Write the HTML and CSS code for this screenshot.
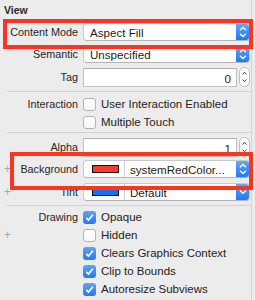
FILE: index.html
```html
<!DOCTYPE html>
<html lang="en">
<head>
  <meta charset="UTF-8">
  <title>View Inspector</title>
  <link rel="stylesheet" href="styles.css">
</head>
<body>
  <div class="inspector">
    <div class="title">View</div>

    <div class="group group-mode">
      <div class="row">
        <div class="label">Content Mode</div>
        <div class="popup">
          <span class="popup-text">Aspect Fill</span>
          <span class="popup-btn"><svg width="14" height="18" viewBox="0 0 14 18"><path d="M4 7.2 L7 4.4 L10 7.2 M4 10.8 L7 13.6 L10 10.8" fill="none" stroke="#fff" stroke-width="1.3"/></svg></span>
        </div>
      </div>
      <div class="row">
        <div class="label">Semantic</div>
        <div class="popup">
          <span class="popup-text">Unspecified</span>
          <span class="popup-btn"><svg width="14" height="18" viewBox="0 0 14 18"><path d="M4 7.2 L7 4.4 L10 7.2 M4 10.8 L7 13.6 L10 10.8" fill="none" stroke="#fff" stroke-width="1.3"/></svg></span>
        </div>
      </div>
      <div class="row">
        <div class="label">Tag</div>
        <div class="field-wrap">
          <div class="field">0</div>
          <svg class="stepper" width="11" height="20" viewBox="0 0 11 20"><rect x="0.5" y="0.5" width="10" height="19" rx="5" fill="#fff" stroke="#bdbdbd"/><path d="M3.5 7.5 L5.5 5.2 L7.5 7.5 M3.5 12.5 L5.5 14.8 L7.5 12.5" fill="none" stroke="#444" stroke-width="1"/></svg>
        </div>
      </div>
    </div>

    <div class="sep"></div>

    <div class="group group-interaction">
      <div class="row row-check">
        <div class="label">Interaction</div>
        <label class="check"><span class="box"></span>User Interaction Enabled</label>
      </div>
      <div class="row row-check">
        <div class="label"></div>
        <label class="check"><span class="box"></span>Multiple Touch</label>
      </div>
    </div>

    <div class="sep sep-2"></div>

    <div class="group group-color">
      <div class="row">
        <div class="label">Alpha</div>
        <div class="field-wrap">
          <div class="field">1</div>
          <svg class="stepper" width="11" height="20" viewBox="0 0 11 20"><rect x="0.5" y="0.5" width="10" height="19" rx="5" fill="#fff" stroke="#bdbdbd"/><path d="M3.5 7.5 L5.5 5.2 L7.5 7.5 M3.5 12.5 L5.5 14.8 L7.5 12.5" fill="none" stroke="#444" stroke-width="1"/></svg>
        </div>
      </div>
      <div class="row">
        <div class="label"><span class="plus">+</span>Background</div>
        <div class="popup">
          <span class="swatch-cell"><span class="swatch swatch-red"></span></span>
          <span class="popup-text">systemRedColor...</span>
          <span class="popup-btn"><svg width="14" height="18" viewBox="0 0 14 18"><path d="M4 7.2 L7 4.4 L10 7.2 M4 10.8 L7 13.6 L10 10.8" fill="none" stroke="#fff" stroke-width="1.3"/></svg></span>
        </div>
      </div>
      <div class="row">
        <div class="label"><span class="plus">+</span>Tint</div>
        <div class="popup">
          <span class="swatch-cell"><span class="swatch swatch-blue"></span></span>
          <span class="popup-text">Default</span>
          <span class="popup-btn"><svg width="14" height="18" viewBox="0 0 14 18"><path d="M4 7.6 L7 10.4 L10 7.6" fill="none" stroke="#fff" stroke-width="1.3"/></svg></span>
        </div>
      </div>
    </div>

    <div class="sep sep-3"></div>

    <div class="group group-drawing">
      <div class="row row-check">
        <div class="label">Drawing</div>
        <label class="check"><span class="box on"><svg width="13" height="13" viewBox="0 0 13 13"><path d="M3.3 6.8 L5.5 9 L9.8 3.8" fill="none" stroke="#fff" stroke-width="1.7"/></svg></span>Opaque</label>
      </div>
      <div class="row row-check">
        <div class="label"><span class="plus">+</span></div>
        <label class="check"><span class="box"></span>Hidden</label>
      </div>
      <div class="row row-check">
        <div class="label"></div>
        <label class="check"><span class="box on"><svg width="13" height="13" viewBox="0 0 13 13"><path d="M3.3 6.8 L5.5 9 L9.8 3.8" fill="none" stroke="#fff" stroke-width="1.7"/></svg></span>Clears Graphics Context</label>
      </div>
      <div class="row row-check">
        <div class="label"></div>
        <label class="check"><span class="box on"><svg width="13" height="13" viewBox="0 0 13 13"><path d="M3.3 6.8 L5.5 9 L9.8 3.8" fill="none" stroke="#fff" stroke-width="1.7"/></svg></span>Clip to Bounds</label>
      </div>
      <div class="row row-check">
        <div class="label"></div>
        <label class="check"><span class="box on"><svg width="13" height="13" viewBox="0 0 13 13"><path d="M3.3 6.8 L5.5 9 L9.8 3.8" fill="none" stroke="#fff" stroke-width="1.7"/></svg></span>Autoresize Subviews</label>
      </div>
    </div>

    <!-- annotation boxes drawn over the inspector -->
    <div class="callout callout-mode"></div>
    <div class="callout callout-bg"></div>
  </div>
</body>
</html>
```

FILE: styles.css
```css
body {
  margin: 0;
  background: #ececec;
  font-family: "Liberation Sans", Arial, sans-serif;
  color: #262626;
  overflow: hidden;
}
.inspector {
  position: relative;
  width: 251px;
  height: 300px;
  border-right: 1px solid #d4d4d4;
}
.title {
  height: 20px;
  line-height: 20px;
  padding-left: 4px;
  font-size: 10.5px;
  font-weight: bold;
  color: #2a2a2a;
}
.group {
  display: flex;
  flex-direction: column;
}
.group-mode {
  margin-top: 3px;
  gap: 4px;
}
.group-interaction {
  margin-top: 3px;
}
.group-color {
  margin-top: 4px;
  gap: 5px;
}
.group-drawing {
  margin-top: 2px;
}
.row {
  display: grid;
  grid-template-columns: 78px 1fr;
  column-gap: 5px;
  align-items: center;
  height: 18px;
  padding-right: 1px;
}
.label {
  display: flex;
  justify-content: flex-end;
  align-items: center;
  font-size: 10.8px;
  white-space: nowrap;
}
.plus {
  margin-right: auto;
  margin-left: 4px;
  color: #a8a8a8;
  font-size: 12px;
  font-weight: 300;
}
.sep {
  height: 1px;
  margin: 6px 0 0 7px;
  background: #d2d2d2;
}
.sep-2 {
  margin-top: 1px;
}
.sep-3 {
  margin-top: 4px;
}
.popup {
  display: flex;
  align-items: center;
  height: 18px;
  background: #fff;
  border: 1px solid #c9c9c9;
  border-bottom-color: #b4b4b4;
  border-radius: 4px;
  box-sizing: border-box;
  overflow: hidden;
}
.popup-text {
  flex: 1;
  padding-left: 6px;
  font-size: 11.6px;
  color: #1c1c1c;
  white-space: nowrap;
}
.popup-btn {
  display: flex;
  width: 14px;
  height: 18px;
  margin: -1px -1px -1px 0;
  background: linear-gradient(#68abfa, #1d74f2);
}
.swatch-cell {
  display: flex;
  align-items: center;
  width: 41px;
  height: 100%;
  padding-left: 8px;
  box-sizing: border-box;
  border-right: 1px solid #d0d0d0;
}
.swatch {
  width: 27px;
  height: 8px;
  border: 1px solid #111;
  box-sizing: border-box;
}
.swatch-red {
  background: #f43b2c;
}
.swatch-blue {
  background: #1a6ef6;
}
.swatch-cell + .popup-text {
  padding-left: 5px;
}
.field-wrap {
  display: flex;
  align-items: center;
  gap: 2px;
}
.field {
  flex: 1;
  height: 19px;
  line-height: 19px;
  padding-right: 5px;
  text-align: right;
  font-size: 11.6px;
  color: #1c1c1c;
  background: #fff;
  border: 1px solid #c3c3c3;
  border-top-color: #b0b0b0;
  box-sizing: border-box;
}
.stepper {
  display: block;
}
.check {
  display: flex;
  align-items: center;
  gap: 5px;
  font-size: 11.5px;
  color: #222;
  white-space: nowrap;
}
.box {
  display: flex;
  width: 13px;
  height: 13px;
  border: 1px solid #b3b3b3;
  border-radius: 3px;
  background: linear-gradient(#fff, #f7f7f7);
  box-sizing: border-box;
}
.box.on {
  border: none;
  background: linear-gradient(#5fa3fa, #2579f3);
}
.callout {
  position: absolute;
  border: 4px solid #fc3420;
  box-sizing: border-box;
}
.callout-mode {
  left: 3px;
  top: 19px;
  width: 250px;
  height: 30px;
}
.callout-bg {
  left: 10px;
  top: 152px;
  width: 243px;
  height: 38px;
}
```
